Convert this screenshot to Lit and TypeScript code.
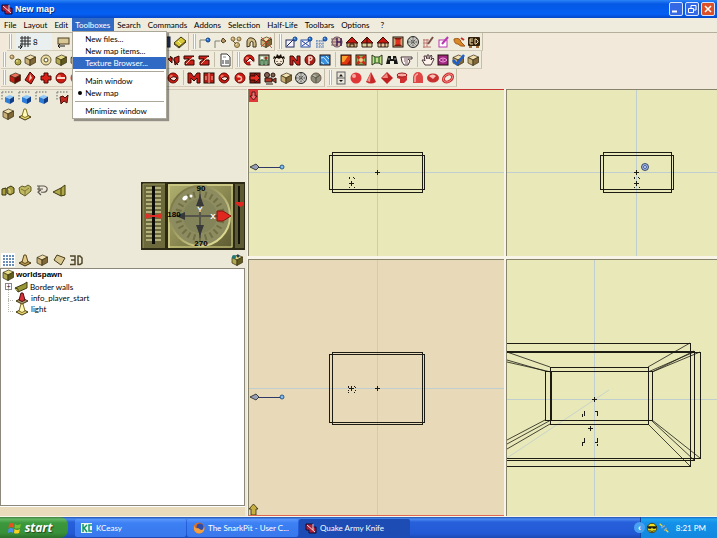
import { LitElement, html, svg, css } from "lit";
import { customElement, property } from "lit/decorators.js";

type Tones = [string, string, string];
const tan: Tones = ["#f0e0b0", "#c8b078", "#806838"];
const olive: Tones = ["#e4dc88", "#b0a850", "#605c20"];
const red: Tones = ["#f07060", "#cc1c14", "#6c0804"];
const blue: Tones = ["#90c8f8", "#2c7cd8", "#103c88"];
const grey: Tones = ["#b8bca8", "#8c8c78", "#705c50"];

const cube = (c: Tones) => svg`
  <g stroke="#382c10" stroke-width="0.7" stroke-linejoin="round">
    <path fill=${c[0]} d="M2 4.500 7.500 2 12.500 4 7 7Z"/>
    <path fill=${c[1]} d="M2 4.500 7 7V12.500L2 10Z"/>
    <path fill=${c[2]} d="M12.500 4 7 7V12.500L12.500 9.500Z"/>
  </g>`;
const ball = (c: Tones, x = 7, y = 7, r = 5) => svg`
  <circle cx=${x} cy=${y} r=${r} fill=${c[1]} stroke=${c[2]} stroke-width="1"/>
  <circle cx=${x - r / 3} cy=${y - r / 3} r=${r / 3} fill=${c[0]}/>`;
const tile = (fill: string) => svg`<rect x="2" y="2" width="10" height="10" fill=${fill} stroke="#201008"/>`;
const dots = (c: string) => svg`<path d="M1 1H13M1 1V9" stroke=${c} stroke-width="1.500" stroke-dasharray="1.500 1.500" fill="none"/>`;
const house = (wall: string, extra: string) => svg`
  <path d="M2 8V12H12V8" fill=${wall} stroke="#382818"/>
  <path d="M1 8 7 2 13 8Z" fill="#c81810" stroke="#381008"/>
  <path d=${extra} stroke="#301008" fill="none"/>`;
const hatch = svg`
  <circle cx="7" cy="7" r="5.500" fill="#c8c8c0" stroke="#282828"/>
  <path d="M3 3 11 11M11 3 3 11M7 2V12M2 7H12" stroke="#484848" stroke-dasharray="1.500 1"/>`;
const lamp = (c: Tones) => svg`
  <path d="M1 10 5 8H9L13 10 7 13Z" fill=${c[1]} stroke="#403410"/>
  <path d="M4 9 6 2H8L10 9 7 10.500Z" fill=${c[0]} stroke=${c[2]}/>`;

const icons: Record<string, unknown> = {
  grid: svg`<path d="M3 3H14M3 6H14M3 9H14M5 1V12M8 1V12M11 1V12" stroke="#282828" fill="none"/><path d="M1 12H5M5 12 3 10M5 12 3 14" stroke="#181818" fill="none"/>`,
  step: svg`<rect x="2" y="3" width="11" height="6" fill="#d8c898" stroke="#504020"/><path d="M2 11H9M2 11 4 9M2 11 4 13" stroke="#181818" fill="none"/>`,
  disk: svg`<rect x="2" y="2" width="10" height="10" fill="#283c70" stroke="#101830"/>`,
  book: svg`<path d="M1 8 8 2 13 6 6 12Z" fill="#d8c838" stroke="#40380c"/><path d="M1 9 6 13 13 7" stroke="#40380c" fill="none"/><path d="M5 6 8 9" stroke="#fff8b0"/>`,
  linkBlue: svg`<path d="M2 13V5H8" stroke="#808070" fill="none"/>${ball(blue, 10, 5, 2)}`,
  linkTan: svg`<path d="M2 13V6H7" stroke="#808070" fill="none"/><path d="M8 6 10 3 13 6 10 8Z" fill="#b89868" stroke="#504020"/>`,
  twin: svg`${ball(tan, 4, 4, 2)}${ball(tan, 10, 4, 2)}${ball(tan, 8, 10, 2.5)}<path d="M4 6 7 9" stroke="#605030"/>`,
  arch: svg`<path d="M3 12V6Q4 2 8 3Q13 4 12 12H9V7Q7 5 6 8V11Z" fill="#d0bc88" stroke="#403414"/>`,
  cubeCut: svg`${cube(tan)}<path d="M2 2 13 13M12 2 2 12" stroke="#c83820" stroke-width="0.800"/>`,
  sendBox: svg`<rect x="2" y="5" width="8" height="7" fill="#f4f4ff" stroke="#202860"/><path d="M3 11 9 5" stroke="#202860"/>${ball(blue, 11, 4, 2)}`,
  crossBox: svg`<rect x="2" y="5" width="9" height="7" fill="#f4f4ff" stroke="#2850a0"/><path d="M3 6 10 11M10 6 3 11" stroke="#2040a0"/>${ball(blue, 11, 4, 2)}`,
  hatchBox: svg`<path d="M2 6H10M2 9H10M2 12H10M3 5V13M6 5V13M9 5V13" stroke="#5078b8" stroke-dasharray="1.500 1"/>${ball(blue, 11, 4, 2)}`,
  quake: svg`<circle cx="7" cy="7" r="5" fill="#d8b8a0" stroke="#604858"/><path d="M1 4H7M1 7H7M1 10H7" stroke="#806068"/><path d="M7 3V11M7 7H11M11 3V11" stroke="#402058" stroke-width="1.500" fill="none"/>`,
  houseTan: house("#c8b078", "M5 12V9H9V12"),
  houseSplit: house("#d8d0a0", "M7 2V12"),
  houseRed: house("#e8c8a0", "M5 8V12M9 8V12"),
  redX: svg`${tile("#c8a878")}<path d="M3 3H11L7 7ZM3 11H11L7 7Z" fill="#801810"/><rect x="4.500" y="4.500" width="5" height="5" fill="#e03020"/>`,
  hatch,
  pen: svg`<path d="M2 5H8M2 8H7M2 12H10M3 4V13M6 4V12" stroke="#c07870"/><path d="M7 9 12 2" stroke="#785048" stroke-width="2"/>`,
  penBox: svg`<rect x="2" y="5" width="8" height="7" fill="#fff" stroke="#b838b0"/><path d="M5 9 11 2" stroke="#b838b0" stroke-width="2"/>`,
  fish: svg`<path d="M2 4Q8 2 9 7L13 11Q8 12 6 9Q2 9 2 4Z" fill="#d88828" stroke="#a05818"/><path d="M9 3 12 5" stroke="#c03020" stroke-width="2"/>`,
  ed: svg`<rect x="1" y="2" width="12" height="9" rx="1" fill="#30200c"/><path d="M6 4H3V9H6M3 6H6M8 4V9H9L11 7V6L9 4Z" stroke="#f0d8a0" fill="none"/><path d="M2 12H5M9 12H12" stroke="#a07038" stroke-width="2"/>`,
  balls: svg`${ball(tan, 4, 4, 2)}${ball(olive, 10, 9, 3)}`,
  cube: cube(tan),
  cubeOlive: cube(olive),
  eye: svg`<circle cx="7" cy="7" r="5" fill="#e8dca0" stroke="#706040"/><circle cx="7" cy="7" r="2" fill="#fff" stroke="#504828"/>`,
  redCube: cube(red),
  redCut: svg`<path d="M1 6 5 4V10ZM7 5 12 3V9L8 12Z" fill="#c82018" stroke="#400804"/><path d="M3 3 11 12" stroke="#281008"/>`,
  redZ: svg`<path d="M2 3H12L8 7H12V12H3V9L7 6H2Z" fill="#c82018" stroke="#300804"/><path d="M4 11 11 4" stroke="#f8c0a0"/>`,
  doc: svg`<path d="M3 1H9L12 4V13H3Z" fill="#fff" stroke="#383838"/><path d="M5 7V11M8 7V11M10 7V11" stroke="#303030"/><path d="M5 4H8" stroke="#888"/>`,
  poke: svg`${ball(red)}<path d="M4 9 8 5 11 8" fill="#fff" stroke="#300"/><circle cx="10" cy="10" r="2" fill="#f4f0e8"/>`,
  people: svg`${tile("#a8c098")}<circle cx="5" cy="5" r="1.500" fill="#fff"/><circle cx="9" cy="5" r="1.500" fill="#a03020"/><path d="M4 12V7H6V12M8 12V7H10V12" stroke="#205830" fill="#d0e8c0"/>`,
  face: svg`<circle cx="7" cy="8" r="4.500" fill="#f8ecd8" stroke="#181008"/><path d="M1 6 2 3 4 4 5 1 7 3 9 1 10 4 12 3 13 6Q9 4 7 6Q5 4 1 6Z" fill="#181008"/><path d="M5 8V9M9 8V9M5 11H9" stroke="#181008"/>`,
  redN: svg`<path d="M2 12V3H5L9 8V3H12V12H9L5 7V12Z" fill="#c82018" stroke="#380804"/>`,
  badgeP: svg`${ball(["#c83020", "#b02018", "#401008"])}<path d="M6 11V4H8Q10 5 8 7H6" stroke="#f8e0d0" fill="none" stroke-width="1.500"/>`,
  sky: svg`${tile("#3890e0")}<path d="M3 5Q6 3 8 7T11 10M3 9 6 11M8 3 11 6" stroke="#c8ecff" fill="none"/>`,
  fire: svg`${tile("#e03810")}<path d="M3 3H9L5 9H3Z" fill="#f8a030"/><path d="M8 11H11V7Z" fill="#a01008"/>`,
  redGreen: svg`${tile("#88b058")}<path d="M3 3 11 11M11 3 3 11" stroke="#d02818" stroke-width="2.500"/><circle cx="7" cy="7" r="2" fill="#f0d090"/>`,
  curtain: svg`<path d="M2 2 5 4H9L12 2V12L9 10H5L2 12Z" fill="#c8dc90" stroke="#283818"/><path d="M5 4V10M9 4V10" stroke="#388030" stroke-width="1.500"/>`,
  bino: svg`<path d="M3 3H6V6H8V3H11L13 11H9V8H5V11H1Z" fill="#181818"/><path d="M4 5V7M10 5V7" stroke="#b0b0a0"/>`,
  point: svg`<path d="M1 4H12V6H8L10 8 8 12H4L2 9Z" fill="#fff8f0" stroke="#403038"/><path d="M4 6H8M4 8H8M5 10H8" stroke="#806070"/>`,
  hand: svg`<path d="M4 12 1 7 3 7 4 8 3 3H5L6 6V2H8V6L10 2 11 3 10 7 12 5 13 6 10 12Z" fill="#fff4ec" stroke="#402830" stroke-width="0.900"/>`,
  spiral: svg`${tile("#a02880")}<path d="M3 7Q7 3 11 7Q7 11 3 7M6 7H8" stroke="#f0a0e0" fill="none"/>`,
  check: svg`${cube(tan)}<path d="M2 7 6 11 13 2" stroke="#2060c8" stroke-width="2.500" fill="none"/>`,
  redDiamond: svg`<path d="M7 1 12 6 8 13 2 9Z" fill="#d02018" stroke="#400804"/><path d="M7 3 9 7 6 10" fill="#f8d0b8"/>`,
  redCross: svg`<path d="M5 2H9V5H12V9H9V12H5V9H2V5H5Z" fill="#d82018" stroke="#400804"/>`,
  redMinus: svg`${ball(red)}<path d="M3 7H11" stroke="#f8d8c8" stroke-width="2"/>`,
  redM: svg`<path d="M1 12V2H4L7 6 10 2H13V12H10V7L7 10 4 7V12Z" fill="#c81c14" stroke="#380804"/>`,
  doors: svg`${tile("#b81c14")}<path d="M7 2V12M4 5V9M10 5V9" stroke="#f8b0a0"/>`,
  mask: svg`${ball(red)}<path d="M4 8Q7 4 11 7L8 10Z" fill="#f8e4d8" stroke="#380804"/>`,
  swirl: svg`${ball(red)}<path d="M5 10Q10 10 8 6L5 5" stroke="#fcc8b8" fill="none" stroke-width="1.500"/>`,
  exit: svg`${tile("#901810")}<path d="M2 5H7V2L12 7 7 12V9H2Z" fill="#e82c20" stroke="#300804"/>`,
  camera: svg`<circle cx="4" cy="4" r="2.500" fill="#806050" stroke="#281810"/><circle cx="10" cy="4" r="2" fill="#806050" stroke="#281810"/><path d="M2 7H9V11H2ZM9 9 13 7V12ZM3 13H10" fill="#b03828" stroke="#281810"/>`,
  rock: svg`${ball(grey)}<path d="M7 7V12M7 7 3 5M7 7 11 4" stroke="#585048"/>`,
  spin: svg`<rect x="3" y="1" width="8" height="12" fill="#e8e4d8" stroke="#606060"/><path d="M3 7H11" stroke="#606060"/><path d="M5 5.500H9L7 3ZM5 9H9L7 11Z" fill="#101010"/>`,
  redBall: svg`<circle cx="7" cy="7" r="5.500" fill="#e03838"/><circle cx="5" cy="5" r="2" fill="#f8a8a0"/>`,
  cone: svg`<path d="M7 1 12 11Q7 14 2 11Z" fill="#c82828"/><path d="M7 2 6 11 3 10Z" fill="#f09088"/>`,
  gem: svg`<path d="M7 1 13 7 7 13 1 7Z" fill="#c02020"/><path d="M7 2 8 7 2 7Z" fill="#f08880"/>`,
  drum: svg`<path d="M2 4V7L5 8V12H9L12 9V4Z" fill="#d03030"/><ellipse cx="7" cy="4" rx="5" ry="2" fill="#f8a8a0" stroke="#a01818"/>`,
  tomb: svg`<path d="M2 12V6Q3 1 7 1T12 6V12Z" fill="#e04848"/><path d="M4 11V6Q5 3 7 3" stroke="#f8b0a8" fill="none" stroke-width="1.500"/>`,
  disc: svg`<ellipse cx="7" cy="7" rx="6" ry="4.500" fill="#c83030"/><path d="M3 5Q7 2 10 5L7 8Z" fill="#f8c0b8"/>`,
  torus: svg`<ellipse cx="7" cy="7" rx="5" ry="3.500" transform="rotate(-35 7 7)" fill="none" stroke="#cc2c2c" stroke-width="3"/><ellipse cx="7" cy="7" rx="5" ry="3.500" transform="rotate(-35 7 7)" fill="none" stroke="#f8a0a0" stroke-width="0.800"/>`,
  selBlue: svg`${dots("#909088")}<path fill="#90c8f8" d="M4 6 8.500 4 13 5.500 9 8Z"/><path fill="#2c7cd8" d="M4 6 9 8V13L4 11Z"/><path fill="#103c88" d="M13 5.500 9 8V13L13 10.500Z"/>`,
  selRed: svg`${dots("#909088")}<path d="M4 6 7 5 9 7 12 4 11 12 8 10 5 13Z" fill="#c02820" stroke="#501008"/>`,
  lamp: lamp(["#fff8b8", "#e8d870", "#807020"]),
  info: lamp(["#d83038", "#a89870", "#501010"]),
  pawn: lamp(["#e0c888", "#b89850", "#604818"]),
  olivePair: svg`<path d="M1 6 5 5V12H1ZM6 5 10 3 13 5V10L9 12 6 10Z" fill="#a8a040" stroke="#38340c"/><path d="M7 6 9 7V10" stroke="#e8e090" fill="none"/>`,
  oliveCup: svg`<path d="M1 5 4 3 7 4 10 2 13 4V8L7 13 2 10Z" fill="#c0b860" stroke="#605c28"/><path d="M3 6 7 8 11 5M7 8V12" stroke="#807838" fill="none"/>`,
  hook: svg`<path d="M2 3H9Q13 4 12 7Q11 10 6 9M2 6H8M4 3V8M6 7 3 9 6 12" stroke="#605850" fill="none" stroke-width="1.200"/>`,
  wedge: svg`<path d="M1 9 9 5 13 2V12L9 13Z" fill="#b0a848" stroke="#403c10"/><path d="M9 5V13" stroke="#403c10"/>`,
  list: svg`<rect width="14" height="14" fill="#fff"/><path d="M2 3H13M2 6H13M2 9H13M2 12H13" stroke="#3868a0" stroke-width="1.500" stroke-dasharray="2 1"/>`,
  sheet: svg`<path d="M2 7 5 2 13 5 9 12Z" fill="#d8c890" stroke="#483c18"/>`,
  threeD: svg`<path d="M1 3H6V11.500H1M2 7H6M9 3H11L13 5V10L11 11.500H9Z" stroke="#504828" stroke-width="1.500" fill="none"/>`,
  palette: svg`${cube(olive)}<circle cx="4" cy="4" r="2" fill="#207878"/><circle cx="8" cy="3" r="1.500" fill="#204050"/>`,
  brush: svg`<path d="M1 8 10 4 13 2V8L4 12Z" fill="#989838" stroke="#403c10"/><path d="M1 8 4 9V12" fill="#d8d070" stroke="#403c10"/>`,
  app: svg`<path d="M2 3H9V6H12V12H5V9H2Z" fill="#b02038" stroke="#180830"/><path d="M3 4 11 11M9 3V9" stroke="#f0e0e8"/>`,
  kc: svg`<rect x="1" y="2" width="11" height="10" fill="#e8f4ec"/><path d="M3 3V11M7 4 4 7 7 11M12 4H9V10H12" stroke="#109868" fill="none" stroke-width="1.500"/>`,
  fox: svg`<circle cx="7" cy="7" r="5.500" fill="#e06c18"/><circle cx="8" cy="6" r="3.500" fill="#2c4cb0"/><path d="M2 4Q3 8 6 7L9 9Q12 9 12 5Q14 12 7 12.500Q1 12 2 4Z" fill="#f4a040"/>`,
  flag: svg`<path d="M1 3Q4 1 6 3L5.500 7Q3 5 0.500 7Z" fill="#e85020"/><path d="M7 3Q9 5 13 3L12 7Q9 8 6.500 7Z" fill="#78c030"/><path d="M0.500 8Q3 6 5.500 8L5 12Q3 10 0 12Z" fill="#4890f0"/><path d="M6.500 8Q9 10 12 8L11 12Q8 13 6 12Z" fill="#f8d020"/>`,
  smile: svg`<circle cx="7" cy="7" r="5.500" fill="#f0e020" stroke="#383008"/><path d="M1 5H13L11 8H8L7 6 6 8H3Z" fill="#181810"/><path d="M4 10Q7 12 10 10" stroke="#181810" fill="none"/>`,
  plug: svg`<path d="M2 2 5 5M9 9 12 12" stroke="#e8d838" stroke-width="1.500"/><path d="M4 7 8 4M7 10 10 7" stroke="#a8a8b0" stroke-width="1.500"/>`,
};

const icon = (name: string) => svg`<svg class="icon" viewBox="0 0 14 14" width="14" height="14" aria-hidden="true">${icons[name]}</svg>`;

/* A bar is a strip with a grip; each inner list is a run of buttons between dividers. */
const toolbars: { grid?: boolean; groups: string[][] }[][] = [
  [
    { grid: true, groups: [["step", "cube", "cube"], ["cube", "cube"], ["cube", "disk", "book"]] },
    { groups: [["linkBlue", "linkTan", "twin", "arch", "cubeCut"]] },
    { groups: [["sendBox", "crossBox", "hatchBox", "quake", "houseTan", "houseSplit", "houseRed", "redX", "hatch", "pen", "penBox", "fish", "ed"]] },
  ],
  [
    { groups: [["balls", "cube", "eye", "cubeOlive", "cube"], ["cube", "cube", "cube", "cube", "cube", "redCut", "redZ", "redZ"], ["doc"]] },
    { groups: [["poke", "people", "face", "redN", "badgeP", "sky"], ["fire", "redGreen", "curtain", "bino", "point"], ["hand", "spiral", "check", "cube"]] },
  ],
  [
    { groups: [["redCube", "redDiamond", "redCross", "redMinus", "redBall"], ["redCube", "redCube", "redCube", "redCube", "redCube", "mask"], ["redM", "doors", "mask", "swirl", "exit", "camera", "cube", "hatch", "rock"]] },
    { groups: [["spin", "redBall", "cone", "gem", "drum", "tomb", "disc", "torus"]] },
  ],
];

const menus = ["File", "Layout", "Edit", "Toolboxes", "Search", "Commands", "Addons", "Selection", "Half-Life", "Toolbars", "Options", "?"];

const base = css`
  * { box-sizing: border-box; }
  button { font: inherit; color: inherit; border: 0; padding: 0; margin: 0; background: none; display: flex; align-items: center; justify-content: center; white-space: nowrap; }
  .icon { display: block; flex: none; }
`;

@customElement("tool-bars")
class ToolBars extends LitElement {
  static styles = [base, css`
    :host { display: block; background: #f2e9da; border-top: 1px solid #b4ae9c; padding-bottom: 2px; }
    .row { display: flex; height: 18px; padding-left: 1px; }
    .row:first-child { padding-left: 7px; }
    .bar { display: flex; align-items: stretch; background: #efebdd; border-right: 1px solid #c4bda8; border-bottom: 1px solid #d2cbb8; margin-right: 2px; }
    .grip { width: 3px; margin: 1px 1px 1px 2px; border-left: 1px solid #c0baa6; border-right: 1px solid #c0baa6; background: #fff; }
    .group { display: flex; }
    .group button { flex: 1; min-width: 0; }
    .rule { width: 1px; margin: 1px 2px; background: #c4bda8; }
    .size { width: 36px; margin: 0 3px; padding-left: 1px; gap: 2px; justify-content: flex-start; background: #eaf0f0; }
  `];
  render() {
    return toolbars.map(row => html`<div class="row">${row.map(bar => html`
      <div class="bar">
        <span class="grip"></span>
        ${bar.grid ? html`<button class="size">${icon("grid")}<span>8</span></button>` : null}
        ${bar.groups.map((g, i) => html`
          ${i ? html`<span class="rule"></span>` : null}
          <div class="group" style="width:${Math.round((g.length * 46) / 3)}px">
            ${g.map(n => html`<button aria-label=${n}>${icon(n)}</button>`)}
          </div>`)}
      </div>`)}</div>`);
  }
}

@customElement("angle-dial")
class AngleDial extends LitElement {
  static styles = css`
    :host { display: block; width: 104px; height: 68px; }
    svg { display: block; }
    text { font: bold 8px "Liberation Sans", sans-serif; text-anchor: middle; }
  `;
  render() {
    const ticks = Array.from({ length: 24 }, (_, i) => i * 15);
    return html`<svg width="104" height="68" viewBox="0 0 104 68">
      <defs>
        <linearGradient id="face" x1="0" y1="0" x2="1" y2="1"><stop offset="0" stop-color="#b0b070"/><stop offset="0.500" stop-color="#8c8a52"/><stop offset="1" stop-color="#5c5a30"/></linearGradient>
        <linearGradient id="rim" x1="0" y1="0" x2="1" y2="1"><stop offset="0" stop-color="#686638"/><stop offset="1" stop-color="#f0eca0"/></linearGradient>
      </defs>
      <rect width="104" height="68" fill="#2c2a14"/>
      <rect x="2" y="2" width="22" height="64" fill="#6c6a3c"/>
      <path d="M2 66V2H24" stroke="#98965c" fill="none"/>
      ${Array.from({ length: 14 }, (_, i) => svg`<path d="M5 ${6 + i * 4}H20" stroke="#b4b27c" stroke-width="2"/>`)}
      <rect x="11" y="4" width="3" height="58" fill="#0c0c08"/>
      <path d="M4 31 10 33H15L21 31V37L15 35H10L4 37Z" fill="#e03028"/>
      <rect x="27" y="2" width="65" height="64" fill="url(#face)"/>
      <path d="M28 66V3H92" stroke="#c8c680" stroke-width="2" fill="none"/>
      <path d="M28 65H91V3" stroke="#e0dc8c" fill="none"/>
      <circle cx="59" cy="34" r="30" fill="#8c8c60" stroke="url(#rim)" stroke-width="2"/>
      ${ticks.map(a => svg`<path transform="rotate(${a} 59 34)" d="M59 9V15" stroke="#707044" stroke-width="2"/>`)}
      <circle cx="59" cy="34" r="17" fill="#84845a"/>
      <path d="M37 34H82M59 12V56" stroke="#54544a" stroke-width="2"/>
      <path d="M59 13 63 24H55ZM59 54 55 43H63ZM35 34 44 30V38Z" fill="#383838"/>
      <path d="M90 34 82 39H76V29H82Z" fill="#e02820" stroke="#801810"/>
      <ellipse cx="44" cy="16" rx="3" ry="2" transform="rotate(-35 44 16)" fill="#fff"/>
      <circle cx="50" cy="14" r="1.500" fill="#fff"/>
      <text x="60" y="9">90</text><text x="33" y="35">180</text><text x="60" y="64">270</text>
      <text x="59" y="30" fill="#fff">Y</text><text x="72" y="37" fill="#fff">X</text>
      <rect x="94" y="2" width="9" height="64" fill="#5c5a34"/>
      <rect x="97" y="4" width="2" height="58" fill="#14140c"/>
      <path d="M95 20H103V23L99 25 95 22Z" fill="#e02820"/>
    </svg>`;
  }
}

@customElement("side-pane")
class SidePane extends LitElement {
  static styles = [base, css`
    :host { display: flex; flex-direction: column; background: #ece9d8; border-top: 1px solid #d0cab8; }
    .row { display: flex; gap: 3px; padding-left: 1px; }
    .row button { width: 14px; height: 16px; }
    .row .wide { margin-left: 4px; }
    .angles { display: flex; justify-content: space-between; align-items: flex-start; margin-top: 60px; padding-right: 2px; }
    .views { margin-top: 2px; padding-right: 3px; }
    .views button:last-child { margin-left: auto; }
    .tree { flex: 1; margin: 0 2px 0 0; padding: 0; list-style: none; background: #fff; border: 1px solid #8c887c; font-family: "Lato", "Liberation Sans", sans-serif; }
    .tree li { display: flex; align-items: center; height: 11px; gap: 2px; color: #000; }
    .tree .root { height: 12px; gap: 1px; font-family: "Liberation Sans", sans-serif; font-weight: bold; }
    .tree .branch { padding-left: 4px; }
    .leaf::before { content: ""; width: 4px; height: 12px; margin: -6px 0 0 7px; border: dotted #b8b8b0; border-width: 0 0 1px 1px; }
    .branch button { width: 7px; height: 7px; border: 1px solid #888; background: #fff; font-size: 7px; line-height: 5px; }
    .foot { height: 10px; background: #e8dcbc; border-top: 1px solid #fff; margin-right: 2px; }
  `];
  row(names: string[], cls = "") {
    return html`<div class="row ${cls}">${names.map(n => html`<button class=${n === "selRed" ? "wide" : ""} aria-label=${n}>${icon(n)}</button>`)}</div>`;
  }
  render() {
    return html`
      ${this.row(["selBlue", "selBlue", "selBlue", "selRed"])}
      ${this.row(["cube", "lamp"])}
      <div class="angles">${this.row(["olivePair", "oliveCup", "hook", "wedge"])}<angle-dial></angle-dial></div>
      ${this.row(["list", "pawn", "cube", "sheet", "threeD", "palette"], "views")}
      <ul class="tree">
        <li class="root">${icon("cubeOlive")}worldspawn</li>
        <li class="branch"><button aria-label="Expand">+</button>${icon("brush")}Border walls</li>
        <li class="leaf">${icon("info")}info_player_start</li>
        <li class="leaf">${icon("lamp")}light</li>
      </ul>
      <div class="foot"></div>`;
  }
}

const cross = (x: number, y: number) => svg`<path d="M${x - 2} ${y + 0.5}h5M${x + 0.5} ${y - 2}v5" class="ink"/>`;
const box = (x1: number, y1: number, x2: number, y2: number) => svg`<rect class="ink" x=${x1 + 0.5} y=${y1 + 0.5} width=${x2 - x1} height=${y2 - y1}/>`;
const axes = (x: number, y: number) => svg`<path class="axis" d="M${x + 0.5} 0V600M0 ${y + 0.5}H900"/>`;
const corners = (x: number, y: number, w: number, h: number) => svg`
  <path class="ink" d="M${x} ${y + 2}v-2h2M${x + w} ${y + 2}v-2h-2M${x} ${y + h - 2}v2h2M${x + w} ${y + h - 2}v2h-2" stroke-dasharray="1 1"/>`;
const eyeArrow = (y: number) => svg`
  <path d="M8 ${y}H32" stroke="#303868"/>
  <path class="smooth" d="M1 ${y} 7 ${y - 3} 10 ${y} 7 ${y + 3}Z" fill="#98a0b8" stroke="#202020"/>
  <circle class="smooth" cx="33" cy=${y} r="2" fill="#80c0e8" stroke="#103c78"/>`;

const drawings: Record<string, unknown> = {
  top: svg`${axes(128, 82)}${box(83, 62, 173, 102)}${box(80, 65, 175, 99)}${cross(128, 82)}${cross(102, 93)}${corners(100, 87, 5, 12)}${eyeArrow(77)}
    <rect y="0" width="9" height="12" fill="#e03838"/><path class="smooth" d="M3 2H6V6H8L4.500 10 1 6H3Z" fill="#f07070" stroke="#400808"/>`,
  side: svg`${axes(129, 82)}${box(96, 62, 164, 102)}${box(93, 65, 166, 99)}${cross(129, 82)}${cross(129, 93)}${corners(127, 87, 5, 12)}
    <circle class="smooth" cx="138" cy="77" r="3.500" fill="#a0b8e0" stroke="#202c50"/><circle class="smooth" cx="138" cy="77" r="1.500" fill="#d8e4ff" stroke="#304890"/>`,
  front: svg`${axes(128, 128)}${box(83, 92, 173, 164)}${box(80, 94, 175, 162)}${cross(128, 128)}${cross(102, 128)}${corners(99, 126, 7, 6)}${eyeArrow(137)}
    <path class="smooth" d="M4.500 244 9 249H7V255H2V249H0Z" fill="#c8b040" stroke="#302808"/>`,
  cam: svg`${axes(87, 139)}<path d="M0 198 102 130" class="axis smooth"/>
    <path class="ink" d="M0 83.500H183.500V206.500H0M0 91.500H187.500V200.500H0M0 92.500H193.500V198.500H0"/>
    <path class="ink" d="M43 107.500H141.500V164.500H43ZM38.500 111.500H145.500V160.500H38.500ZM44.500 111V160"/>
    <path class="ink smooth" d="M0 92 43 107M0 100 38 111M0 102 44 112M183 83 141 107M187 91 145 112M193 92 145 112M187 92 141 112M0 180 38 160M0 189 43 164M0 184 44 160M145 160 193 198M145 161 187 200M141 164 183 206"/>
    ${cross(87, 139)}${cross(83, 168)}
    <path class="ink" d="M77.500 151V156M75.500 154V157M88 151.500H90.500V156M77.500 178V182H75M75.500 183V186M90.500 178V182H88M90.500 184V186"/>`,
};

@customElement("map-view")
class MapView extends LitElement {
  @property() view = "top";
  static styles = css`
    :host { display: block; overflow: hidden; min-width: 0; background: #e8e8b8; border-left: 1px solid #88846c; border-top: 1px solid #88846c; }
    :host([view="top"]) { border-top-color: #c83030; }
    :host([view="front"]) { background: #e8dab8; border-bottom: 1px solid #e06850; }
    svg { display: block; width: 100%; height: 100%; shape-rendering: crispEdges; }
    .ink { stroke: #1c1c14; fill: none; }
    .axis { stroke: #c0ced0; fill: none; }
    .smooth { shape-rendering: auto; stroke-width: 0.8; }
  `;
  render() {
    return html`<svg>${drawings[this.view]}</svg>`;
  }
}

@customElement("task-bar")
class TaskBar extends LitElement {
  static styles = [base, css`
    :host { display: flex; height: 21px; color: #fff; background: linear-gradient(#2050b0 0, #4c8cf0 2px, #2860dc 5px, #2258d4 17px, #1c48b0 21px); }
    .start { width: 68px; gap: 3px; padding-right: 8px; border-radius: 0 8px 8px 0; background: linear-gradient(#3c7c3c 0, #64b864 2px, #3c983c 6px, #389038 16px, #2c702c 21px); font: italic bold 12px "Open Sans", "Liberation Sans", sans-serif; text-shadow: 1px 1px 1px #204820; }
    .tasks { display: flex; flex: 1; padding: 2px 0 0 7px; gap: 1px; }
    .tasks button { width: 111px; height: 18px; justify-content: flex-start; gap: 2px; padding-left: 5px; border-radius: 2px; background: linear-gradient(#5c98fc, #3c80f4 4px, #3878ec); }
    .tasks .on { background: #1c4cb4; }
    .tray { display: flex; align-items: center; width: 77px; padding-right: 11px; white-space: nowrap; background: linear-gradient(#1468c0 0, #20a4f0 2px, #1490e8 6px, #1288e0 21px); border-left: 1px solid #1048a0; }
    .tray .more { width: 11px; height: 11px; margin-left: -7px; margin-right: 1px; border-radius: 6px; background: #48a0f0; font: bold 9px "Liberation Sans", sans-serif; }
    .tray .icon { width: 12px; height: 12px; }
    .clock { margin-left: auto; }
  `];
  render() {
    return html`
      <button class="start">${icon("flag")}start</button>
      <div class="tasks">
        <button>${icon("kc")}KCeasy</button>
        <button>${icon("fox")}The SnarkPit - User C...</button>
        <button class="on">${icon("app")}Quake Army Knife</button>
      </div>
      <div class="tray"><button class="more" aria-label="Show hidden icons">‹</button>${icon("smile")}${icon("plug")}<span class="clock">8:21 PM</span></div>`;
  }
}

@customElement("app-root")
class AppRoot extends LitElement {
  static styles = [base, css`
    :host { display: flex; flex-direction: column; height: 100vh; overflow: hidden; background: #f2e9da; color: #000; font: 8px/12px "Lato", "Liberation Sans", sans-serif; }
    .title { display: flex; align-items: center; height: 18px; padding: 0 2px 0 0; color: #fff; background: linear-gradient(#2c84f8 0, #0458e4 4px, #0460f4 14px, #0448c8 18px); }
    .title h1 { flex: 1; margin: 0; font: bold 9px/16px "Liberation Sans", sans-serif; text-shadow: 1px 1px 0 #082c80; }
    .title .icon { margin-right: 1px; }
    .title button { width: 14px; height: 14px; margin-left: 2px; border: 1px solid #d8e4fc; border-radius: 2px; background: #3468e4; }
    .title .close { background: #dc5028; }
    .menubar { display: flex; height: 14px; padding-left: 1px; background: #efebdd; }
    .entry { position: relative; display: flex; }
    .entry:last-child { margin-left: 4px; }
    .entry > button { padding: 0 4px 0 3px; }
    .entry .open { color: #fff; background: #316ac5; }
    .menu { position: absolute; z-index: 1; top: 13px; left: 0; width: 95px; padding: 1px 0; background: #fff; border: 1px solid #aca899; box-shadow: 2px 2px 1px #00000060; color: #000; }
    .menu button { position: relative; width: 100%; height: 12px; padding-left: 12px; justify-content: flex-start; }
    .menu .hot { color: #fff; background: #316ac5; }
    .menu hr { height: 1px; margin: 2px 2px 3px; border: 0; background: #aca899; }
    .menu .current::before { content: ""; position: absolute; left: 5px; top: 4px; width: 4px; height: 4px; border-radius: 2px; background: #000; }
    .work { flex: 1; min-height: 0; display: grid; grid-template-columns: 247px minmax(0, 256fr) minmax(0, 211fr); grid-template-rows: minmax(0, 167fr) minmax(0, 257fr); column-gap: 2px; row-gap: 3px; padding-bottom: 1px; background: #f8f4e8; }
    side-pane { grid-row: 1 / 3; }
    .work map-view:nth-of-type(odd) { margin-left: -1px; }
  `];
  menu() {
    return html`<div class="menu">
      <button>New files...</button><button>New map items...</button><button class="hot">Texture Browser...</button>
      <hr><button>Main window</button><button class="current">New map</button>
      <hr><button>Minimize window</button></div>`;
  }
  render() {
    return html`
      <header class="title">${icon("app")}<h1>New map</h1>
        <button aria-label="Minimize"><svg width="12" height="12"><path d="M2 8.500H7" stroke="#fff" stroke-width="2"/></svg></button>
        <button aria-label="Restore"><svg width="12" height="12"><path d="M5 5V2.500H10V7H8M2.500 5.500H7.500V9.500H2.500Z" stroke="#fff" fill="none"/></svg></button>
        <button class="close" aria-label="Close"><svg width="12" height="12"><path d="M3 3 9 9M9 3 3 9" stroke="#fff" stroke-width="1.500"/></svg></button>
      </header>
      <nav class="menubar">${menus.map(m => html`<div class="entry">
        <button class=${m === "Toolboxes" ? "open" : ""}>${m}</button>${m === "Toolboxes" ? this.menu() : null}</div>`)}</nav>
      <tool-bars></tool-bars>
      <main class="work">
        <side-pane></side-pane>
        <map-view view="top"></map-view><map-view view="side"></map-view>
        <map-view view="front"></map-view><map-view view="cam"></map-view>
      </main>
      <task-bar></task-bar>`;
  }
}
